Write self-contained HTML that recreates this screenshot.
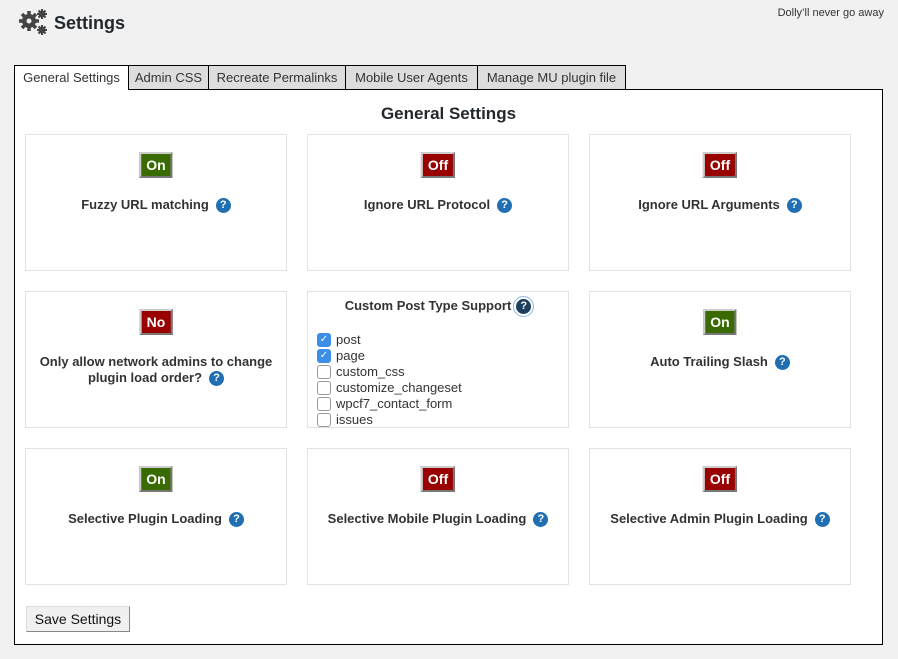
<!DOCTYPE html>
<html><head><style>
body{margin:0;background:#f1f1f1;font-family:"Liberation Sans",sans-serif;color:#23282d;width:898px;height:659px;position:relative;overflow:hidden}
.title{position:absolute;left:18px;top:8px;font-size:18px;font-weight:bold;display:flex;align-items:center}
.dolly{position:absolute;right:14px;top:7px;font-size:11px;color:#333}
.tabs{position:absolute;left:14px;top:65px;height:24px;display:flex}
.tab{box-sizing:border-box;border:1px solid #000;border-bottom:none;background:#ddd;font-size:13px;line-height:23px;margin-right:-1px;color:#333;text-align:center;height:24px}
.tab.a{background:#fff;height:25px;position:relative;z-index:2}
.main{position:absolute;left:14px;top:89px;width:867px;height:554px;border:1px solid #000;background:#fff}
h2{margin:0;position:absolute;top:14px;width:100%;text-align:center;font-size:17px}
.card{position:absolute;width:260px;height:135px;border:1px solid #e2e2e2;text-align:center}
.btn{position:absolute;top:17px;left:50%;transform:translateX(-50%);height:22px;color:#fff;font-weight:bold;font-size:14px;line-height:22px;padding:0 5px;border:2px solid;border-color:#ccc #777 #777 #ccc}
.on{background:#3a6b00}.off{background:#990000}
.lbl{position:absolute;top:62px;width:100%;font-size:13px;font-weight:bold;color:#333}
.q{display:inline-block;width:15px;height:15px;border-radius:50%;background:#1f6fb2;color:#fff;font-size:11px;line-height:15px;text-align:center;vertical-align:middle;margin-left:7px}
.cb{text-align:left;font-size:13px;position:absolute;left:9px;top:40px;line-height:16px;color:#333}
.cb div{display:flex;align-items:center}
.box{width:12px;height:12px;border:1px solid #999;border-radius:3px;margin-right:5px;background:#fff;font-size:10px;line-height:12px;text-align:center;color:#fff}
.box.c{background:#3d8fe6;border-color:#3d8fe6}
.save{position:absolute;left:11px;top:516px;width:102px;height:24px;border:1px solid;border-color:#ddd #888 #888 #ddd;background:#f0f0f0;font-size:14px;line-height:24px;text-align:center;color:#111}
</style></head><body>
<div class="title"><svg width="32" height="30" viewBox="0 0 32 30"><g fill="#444"><circle cx="11" cy="13" r="7"/><g stroke="#444" stroke-width="3.5"><line x1="11" y1="3" x2="11" y2="23"/><line x1="1" y1="13" x2="21" y2="13"/><line x1="4" y1="6" x2="18" y2="20"/><line x1="18" y1="6" x2="4" y2="20"/></g><circle cx="11" cy="13" r="2.5" fill="#f1f1f1"/><circle cx="24" cy="6" r="3.5"/><g stroke="#444" stroke-width="2"><line x1="24" y1="1" x2="24" y2="11"/><line x1="19" y1="6" x2="29" y2="6"/><line x1="20.5" y1="2.5" x2="27.5" y2="9.5"/><line x1="27.5" y1="2.5" x2="20.5" y2="9.5"/></g><circle cx="24" cy="22" r="3.5"/><g stroke="#444" stroke-width="2"><line x1="24" y1="17" x2="24" y2="27"/><line x1="19" y1="22" x2="29" y2="22"/><line x1="20.5" y1="18.5" x2="27.5" y2="25.5"/><line x1="27.5" y1="18.5" x2="20.5" y2="25.5"/></g></g></svg><span style="margin-left:4px">Settings</span></div>
<div class="dolly">Dolly’ll never go away</div>
<div class="tabs"><div class="tab a" style="width:115px">General Settings</div><div class="tab" style="width:81px">Admin CSS</div><div class="tab" style="width:138px">Recreate Permalinks</div><div class="tab" style="width:133px">Mobile User Agents</div><div class="tab" style="width:149px">Manage MU plugin file</div></div>
<div class="main">
<h2>General Settings</h2>
<div class="card" style="left:10px;top:44px"><div class="btn on">On</div><div class="lbl">Fuzzy URL matching<span class="q">?</span></div></div>
<div class="card" style="left:292px;top:44px"><div class="btn off">Off</div><div class="lbl">Ignore URL Protocol<span class="q">?</span></div></div>
<div class="card" style="left:574px;top:44px"><div class="btn off">Off</div><div class="lbl">Ignore URL Arguments<span class="q">?</span></div></div>
<div class="card" style="left:10px;top:201px"><div class="btn off">No</div><div class="lbl" style="line-height:16px;top:62px">Only allow network admins to change<br>plugin load order?<span class="q">?</span></div></div>
<div class="card" style="left:292px;top:201px"><div class="lbl" style="top:6px">Custom Post Type Support<span class="q" style="background:#1d3e5c;outline:1px solid #8ab4e0;outline-offset:2px;margin-left:5px">?</span></div>
<div class="cb"><div><span class="box c">✓</span>post</div><div><span class="box c">✓</span>page</div><div><span class="box"></span>custom_css</div><div><span class="box"></span>customize_changeset</div><div><span class="box"></span>wpcf7_contact_form</div><div><span class="box"></span>issues</div></div></div>
<div class="card" style="left:574px;top:201px"><div class="btn on">On</div><div class="lbl">Auto Trailing Slash<span class="q">?</span></div></div>
<div class="card" style="left:10px;top:358px"><div class="btn on">On</div><div class="lbl">Selective Plugin Loading<span class="q">?</span></div></div>
<div class="card" style="left:292px;top:358px"><div class="btn off">Off</div><div class="lbl">Selective Mobile Plugin Loading<span class="q">?</span></div></div>
<div class="card" style="left:574px;top:358px"><div class="btn off">Off</div><div class="lbl">Selective Admin Plugin Loading<span class="q">?</span></div></div>
<div class="save">Save Settings</div>
</div>
</body></html>
